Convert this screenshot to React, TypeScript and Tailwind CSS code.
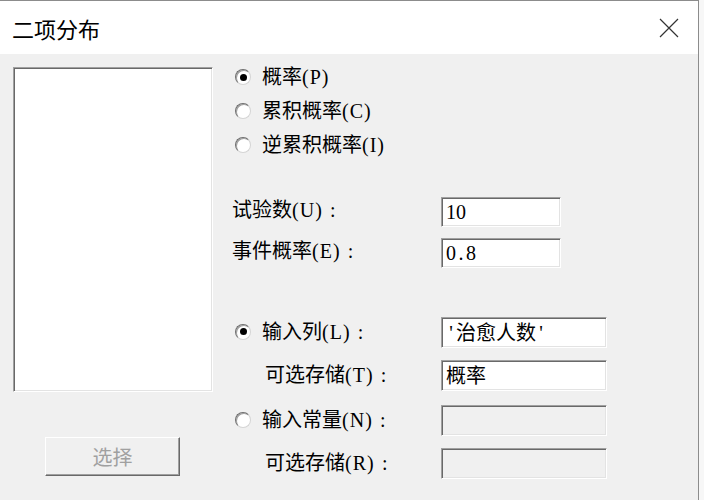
import type { ReactNode } from 'react';

const serif = "font-['Liberation_Serif','Noto_Sans_CJK_SC',serif]";
const sans = "font-['Noto_Sans_CJK_SC','Liberation_Sans',sans-serif]";

// classic sunken edge: dark on top/left, light on bottom/right
const sunken =
  'border border-t-[#a0a0a0] border-l-[#a0a0a0] border-r-white border-b-white shadow-[inset_1px_1px_0_#696969,inset_-1px_-1px_0_#e3e3e3]';

// ASCII characters get a half-width cell, like the dialog's bitmap font
function Half({ text }: { text: string }) {
  return (
    <>
      {[...text].map((c, i) =>
        /[\x20-\x7e]/.test(c) ? (
          <span key={i} className="inline-block w-[10px] text-center">
            {c}
          </span>
        ) : (
          <span key={i}>{c}</span>
        ),
      )}
    </>
  );
}

function Radio({ checked }: { checked?: boolean }) {
  return (
    <span className="flex h-4 w-4 shrink-0 items-center justify-center rounded-full border border-t-[#6e6e6e] border-l-[#6e6e6e] border-r-[#d4d4d4] border-b-[#d4d4d4] bg-white shadow-[inset_1px_1px_0_#a0a0a0]">
      {checked && <span className="h-[7px] w-[7px] rounded-full bg-black" />}
    </span>
  );
}

function Caption({ text, hotkey, colon }: { text: string; hotkey: string; colon?: boolean }) {
  return (
    <span className="whitespace-nowrap">
      {text}
      <span className="tracking-[1px]">({hotkey})</span>
      {colon && <span className="inline-block w-[20px] text-center">:</span>}
    </span>
  );
}

function Field({ width, disabled, children }: { width: string; disabled?: boolean; children?: ReactNode }) {
  return (
    <div
      className={`flex h-full items-center pl-[4px] text-[20px] leading-none text-black ${width} ${sunken} ${
        disabled ? 'bg-[#f0f0f0]' : 'bg-white'
      }`}
    >
      {children}
    </div>
  );
}

export default function App() {
  return (
    <div className="flex h-[500px] w-[704px] bg-[#f7f7f7]">
      <div className="flex w-[699px] flex-col border-t border-r border-[#8c8c8c] bg-[#f0f0f0]">
        {/* Title bar */}
        <div className="flex h-[53px] shrink-0 items-center justify-between bg-white pl-[12px] pr-[19px]">
          <span className={`${sans} text-[22px] leading-none text-black`}>二项分布</span>
          <svg width="20" height="20" viewBox="0 0 20 20" className="text-[#333]">
            <path d="M1 1L19 19M19 1L1 19" stroke="currentColor" strokeWidth="1.2" fill="none" />
          </svg>
        </div>

        <div className={`flex flex-1 ${serif} text-[20px] text-black`}>
          {/* Variable list + select button */}
          <div className="ml-[13px] flex w-[200px] flex-col">
            <div className={`mt-[13px] h-[325px] bg-white ${sunken}`} />
            <button
              disabled
              className={`mt-[45px] ml-[32px] h-[39px] w-[135px] border border-t-white border-l-white border-r-[#696969] border-b-[#696969] bg-[#f0f0f0] shadow-[inset_-1px_-1px_0_#a0a0a0] ${sans} text-[20px] leading-none text-[#a0a0a0]`}
            >
              选择
            </button>
          </div>

          {/* Options */}
          <div className="ml-[19px] flex flex-col">
            <div className="mt-[6px] flex flex-col pl-[3px]">
              <label className="flex h-[34px] items-center gap-[11px]">
                <Radio checked />
                <Caption text="概率" hotkey="P" />
              </label>
              <label className="flex h-[34px] items-center gap-[11px]">
                <Radio />
                <Caption text="累积概率" hotkey="C" />
              </label>
              <label className="flex h-[34px] items-center gap-[11px]">
                <Radio />
                <Caption text="逆累积概率" hotkey="I" />
              </label>
            </div>

            <div className="mt-[35px] flex h-[30px] items-center">
              <span className="w-[209px] pb-[4px]">
                <Caption text="试验数" hotkey="U" colon />
              </span>
              <Field width="w-[120px]">
                <Half text="10" />
              </Field>
            </div>
            <div className="mt-[11px] flex h-[30px] items-center">
              <span className="w-[209px] pb-[4px]">
                <Caption text="事件概率" hotkey="E" colon />
              </span>
              <Field width="w-[120px]">
                <Half text="0.8" />
              </Field>
            </div>

            <div className="mt-[49px] flex h-[31px] items-center">
              <label className="flex w-[209px] items-center gap-[11px] pb-[2px] pl-[3px]">
                <Radio checked />
                <Caption text="输入列" hotkey="L" colon />
              </label>
              <Field width="w-[166px]">
                <Half text="'治愈人数'" />
              </Field>
            </div>
            <div className="mt-[12px] flex h-[31px] items-center">
              <span className="w-[209px] pb-[2px] pl-[33px]">
                <Caption text="可选存储" hotkey="T" colon />
              </span>
              <Field width="w-[166px]">概率</Field>
            </div>
            <div className="mt-[14px] flex h-[31px] items-center">
              <label className="flex w-[209px] items-center gap-[11px] pb-[2px] pl-[3px]">
                <Radio />
                <Caption text="输入常量" hotkey="N" colon />
              </label>
              <Field width="w-[166px]" disabled />
            </div>
            <div className="mt-[12px] flex h-[31px] items-center">
              <span className="w-[209px] pb-[2px] pl-[33px]">
                <Caption text="可选存储" hotkey="R" colon />
              </span>
              <Field width="w-[166px]" disabled />
            </div>
          </div>
        </div>
      </div>
    </div>
  );
}
